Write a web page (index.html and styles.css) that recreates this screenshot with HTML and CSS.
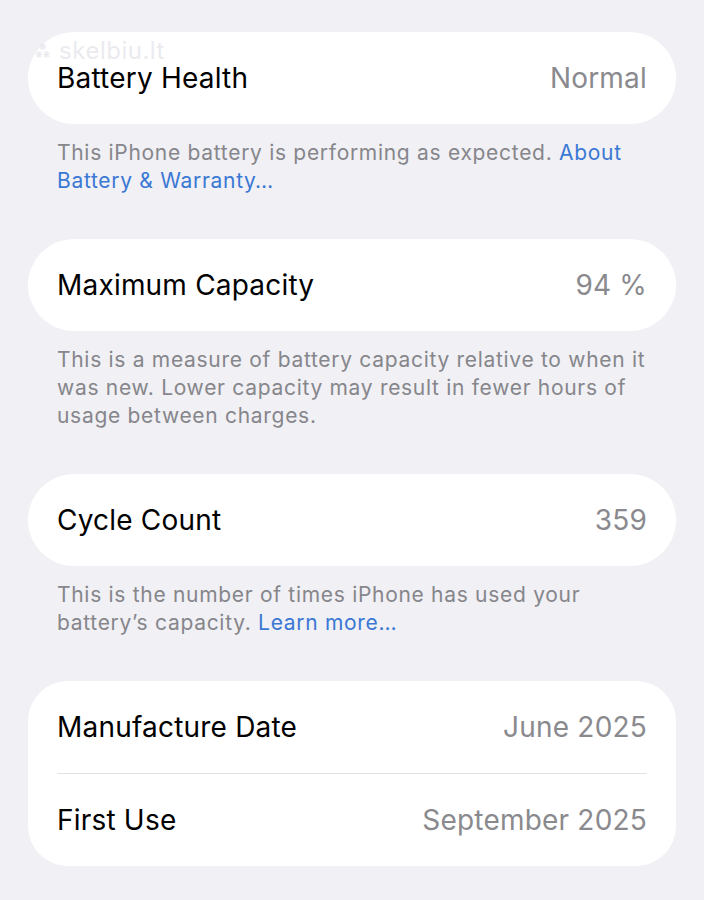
FILE: index.html
```html
<!DOCTYPE html>
<html lang="en">
<head>
<meta charset="utf-8">
<title>Battery</title>
<link rel="stylesheet" href="styles.css">
</head>
<body>
<div class="page">
  <div class="watermark">⁂ skelbiu.lt</div>
  <section class="group">
    <div class="card">
      <div class="row"><span class="label">Battery Health</span><span class="value">Normal</span></div>
    </div>
    <p class="footer">This iPhone battery is performing as expected. <a class="link">About Battery &amp; Warranty…</a></p>
  </section>
  <section class="group">
    <div class="card">
      <div class="row"><span class="label">Maximum Capacity</span><span class="value">94 %</span></div>
    </div>
    <p class="footer">This is a measure of battery capacity relative to when it was new. Lower capacity may result in fewer hours of usage between charges.</p>
  </section>
  <section class="group">
    <div class="card">
      <div class="row"><span class="label">Cycle Count</span><span class="value">359</span></div>
    </div>
    <p class="footer">This is the number of times iPhone has used your battery’s capacity. <a class="link">Learn more…</a></p>
  </section>
  <section class="group">
    <div class="card card-multi">
      <div class="row"><span class="label">Manufacture Date</span><span class="value">June 2025</span></div>
      <div class="divider"></div>
      <div class="row"><span class="label">First Use</span><span class="value">September 2025</span></div>
    </div>
  </section>
</div>
</body>
</html>
```
FILE: styles.css
```css
html, body {
  margin: 0;
  padding: 0;
  background: #f0f0f5;
}
body {
  font-family: Inter, "Noto Sans", sans-serif;
  -webkit-font-smoothing: antialiased;
}
.page {
  position: relative;
  padding: 32px 28px 0;
  display: flex;
  flex-direction: column;
}
.watermark {
  position: absolute;
  left: 34px;
  top: 36px;
  font-size: 24px;
  color: rgba(228, 228, 234, 0.75);
  letter-spacing: 0.5px;
  pointer-events: none;
}
.group {
  display: flex;
  flex-direction: column;
}
.card {
  background: #ffffff;
  border-radius: 46px;
  padding: 0 29px;
}
.card-multi {
  border-radius: 40px;
}
.row {
  height: 92px;
  display: flex;
  align-items: center;
  justify-content: space-between;
  font-size: 28px;
  letter-spacing: 0.2px;
}
.label {
  color: #000000;
}
.value {
  color: #8a8a8e;
}
.divider {
  height: 1px;
  background: #e2e2e6;
}
.footer {
  margin: 0;
  padding: 15px 29px 44px;
  font-size: 21px;
  line-height: 28px;
  color: #86868b;
  letter-spacing: 0.7px;
}
.link {
  color: #3a78d4;
}
```
